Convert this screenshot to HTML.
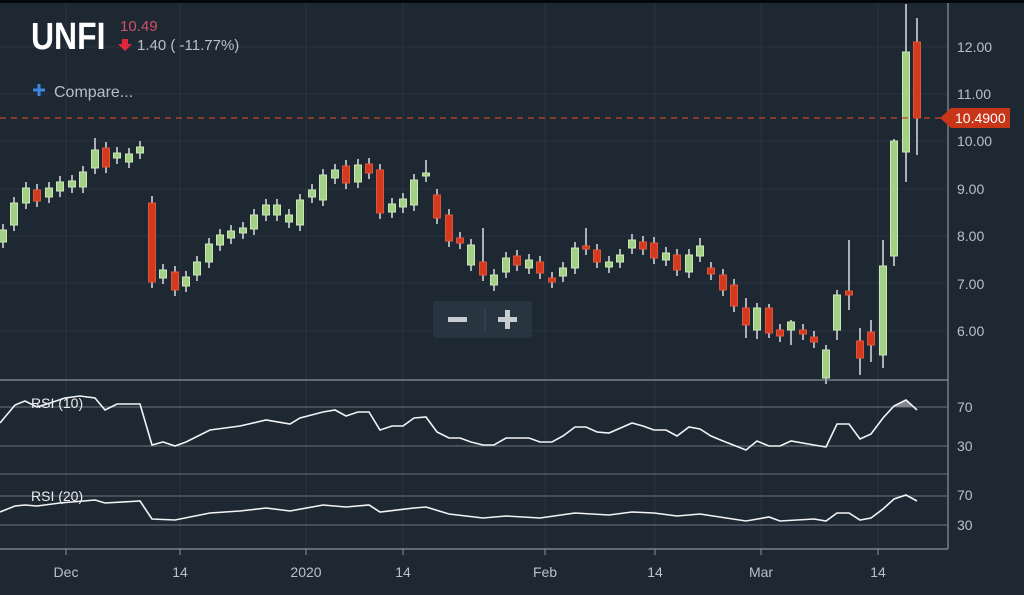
<!DOCTYPE html>
<html><head><meta charset="utf-8">
<style>
html,body{margin:0;padding:0;background:#1e2833;width:1024px;height:595px;overflow:hidden;font-family:"Liberation Sans",sans-serif}
svg{position:absolute;left:0;top:0}
</style></head><body>
<svg width="1024" height="595" id="s" xmlns="http://www.w3.org/2000/svg">
<rect width="1024" height="595" fill="#1e2833"/>
<rect width="1024" height="3" fill="#05080b"/>
<g stroke="#2a3541" stroke-width="1" id="grid"></g>
<g id="c"></g>
<line x1="0" y1="118" x2="948" y2="118" stroke="#c8452a" stroke-width="1.2" stroke-dasharray="6,5"/>
<line x1="948" y1="3" x2="948" y2="549" stroke="#8a939c" stroke-width="1.2"/>
<line x1="0" y1="380" x2="948" y2="380" stroke="#8a939c" stroke-width="1.2"/>
<line x1="0" y1="474" x2="948" y2="474" stroke="#6c757e" stroke-width="1"/>
<line x1="0" y1="549" x2="948" y2="549" stroke="#8a939c" stroke-width="1.2"/>
<g stroke="#6c757e" stroke-width="1">
<line x1="0" y1="407" x2="948" y2="407"/><line x1="0" y1="446" x2="948" y2="446"/>
<line x1="0" y1="496" x2="948" y2="496"/><line x1="0" y1="525" x2="948" y2="525"/>
</g>
<g id="r"></g>
<g fill="#b9c0c7" font-size="14">
<text x="957" y="52">12.00</text><text x="957" y="99">11.00</text><text x="957" y="146">10.00</text>
<text x="957" y="194">9.00</text><text x="957" y="241">8.00</text><text x="957" y="289">7.00</text><text x="957" y="336">6.00</text>
<text x="957" y="412">70</text><text x="957" y="451">30</text><text x="957" y="500">70</text><text x="957" y="530">30</text>
<text x="66" y="577" text-anchor="middle">Dec</text><text x="180" y="577" text-anchor="middle">14</text>
<text x="306" y="577" text-anchor="middle">2020</text><text x="403" y="577" text-anchor="middle">14</text>
<text x="545" y="577" text-anchor="middle">Feb</text><text x="655" y="577" text-anchor="middle">14</text>
<text x="761" y="577" text-anchor="middle">Mar</text><text x="878" y="577" text-anchor="middle">14</text>
</g>
<g stroke="#8a939c"><line x1="66" y1="549" x2="66" y2="555"/><line x1="180" y1="549" x2="180" y2="555"/><line x1="306" y1="549" x2="306" y2="555"/><line x1="403" y1="549" x2="403" y2="555"/><line x1="545" y1="549" x2="545" y2="555"/><line x1="655" y1="549" x2="655" y2="555"/><line x1="761" y1="549" x2="761" y2="555"/><line x1="878" y1="549" x2="878" y2="555"/></g>
<path d="M940 118 L951 108 H1010 V128 H951 Z" fill="#c8361a"/>
<text x="955" y="123" fill="#fff" font-size="14">10.4900</text>
<text x="31" y="408" fill="#e8ecef" font-size="14">RSI (10)</text>
<text x="31" y="501" fill="#e8ecef" font-size="14">RSI (20)</text>
<rect x="433" y="301" width="99" height="37" rx="3" fill="#283440"/>
<line x1="485" y1="309" x2="485" y2="331" stroke="#3c4855"/>
<rect x="448" y="317" width="19" height="5" fill="#c7ccd1"/>
<rect x="498" y="317" width="19" height="5" fill="#c7ccd1"/><rect x="505" y="310" width="5" height="19" fill="#c7ccd1"/>
<text x="0" y="0" fill="#fff" font-size="38" font-weight="bold" transform="translate(31,49) scale(0.84,1)">UNFI</text>
<text x="120" y="31" fill="#d05065" font-size="15">10.49</text>
<path d="M122 39 h6 v5 h4 l-7 7 l-7 -7 h4 z" fill="#e0263a"/>
<text x="137" y="50" fill="#b9c0c7" font-size="15">1.40 ( -11.77%)</text>
<path d="M33 90 h12 M39 84 v12" stroke="#3a86e0" stroke-width="3"/>
<text x="54" y="97" fill="#b7bec6" font-size="16">Compare...</text>
</svg>
<script>
var NS="http://www.w3.org/2000/svg";
function el(p,t,a){var e=document.createElementNS(NS,t);for(var k in a)e.setAttribute(k,a[k]);p.appendChild(e);return e;}
var g=document.getElementById('grid');
[47,94,141,189,236,283,331].forEach(function(y){el(g,'line',{x1:0,y1:y,x2:948,y2:y});});
[66,180,306,403,545,655,761,878].forEach(function(x){el(g,'line',{x1:x,y1:3,x2:x,y2:549});});
var d=[[3,230,242,'g'],[14,203,225,'g'],[26,188,203,'g'],[37,190,201,'r'],[49,188,197,'g'],[60,182,191,'g'],[72,181,187,'g'],[83,172,187,'g'],[95,150,168,'g',138],[106,148,167,'r'],[117,153,158,'g'],[129,154,162,'g'],[140,147,153,'g'],[152,203,282,'r',196],[163,270,278,'g'],[175,272,290,'r'],[186,277,286,'g'],[197,262,275,'g'],[209,244,262,'g'],[220,235,245,'g'],[231,231,238,'g'],[243,228,233,'g'],[254,215,229,'g'],[266,205,215,'g'],[277,205,215,'g'],[289,215,222,'g'],[300,200,225,'g'],[312,190,197,'g'],[323,175,200,'g'],[335,170,178,'g'],[346,166,183,'r'],[358,165,182,'g'],[369,164,173,'r'],[380,170,213,'r'],[392,204,212,'g'],[403,199,207,'g'],[414,180,205,'g'],[426,173,176,'g',160],[437,195,218,'r'],[449,215,241,'r'],[460,238,243,'r'],[471,245,265,'g'],[483,262,275,'r',228],[494,275,285,'g'],[506,258,272,'g'],[517,256,265,'r'],[529,260,268,'g'],[540,262,273,'r'],[552,278,282,'r'],[563,268,276,'g'],[575,248,268,'g'],[586,246,249,'r',228],[597,250,262,'r'],[609,262,267,'g'],[620,255,262,'g'],[632,240,248,'g'],[643,242,249,'r'],[654,243,258,'r'],[666,253,260,'g'],[677,255,270,'r'],[689,255,272,'g'],[700,246,256,'g',238],[711,268,274,'r'],[723,275,290,'r'],[734,285,306,'r'],[746,308,325,'r',298,338],[757,308,330,'g',303,339],[769,308,333,'r',304,338],[780,330,336,'r'],[791,322,330,'g',320,345],[803,330,334,'r'],[814,337,342,'r'],[826,350,378,'g',345],[837,295,330,'g',290,340],[849,291,295,'r',240,310],[860,341,358,'r',328,375],[871,332,345,'r',320,362],[883,266,355,'g',240,368],[894,141,256,'g',139,266],[906,52,152,'g',4,182],[917,42,118,'r',18,155]];
var c=document.getElementById('c');
d.forEach(function(a){var x=a[0],t=a[1],b=a[2],col=a[3];var wt=a[4]||t-6,wb=a[5]||b+6;
el(c,'line',{x1:x,y1:wt,x2:x,y2:wb,stroke:'#d8dde2','stroke-width':1.5});
el(c,'rect',{x:x-3.5,y:t,width:7,height:Math.max(3,b-t),fill:col=='g'?'#a3cf86':'#d3391d',stroke:col=='g'?'#c9e8b4':'#e0553a','stroke-width':1});});
var r=document.getElementById('r');
var r10="0,423 15,405 25,401 37,407 50,403 65,398 80,396 95,398 105,410 117,404 140,404 152,445 163,442 175,446 186,442 210,430 240,426 266,420 290,424 300,418 323,412 335,410 346,416 358,412 369,412 380,430 392,426 403,426 414,418 426,417 437,432 449,438 460,438 471,442 483,445 494,445 506,438 529,438 540,442 552,442 563,436 575,427 586,427 597,432 609,433 632,423 643,426 654,430 666,430 677,436 689,427 700,429 711,436 723,441 746,450 757,441 769,446 780,446 791,441 814,445 826,447 837,424 849,424 860,439 871,434 883,418 894,406 906,400 917,410";
var r20="0,512 15,506 25,505 37,506 60,503 95,500 105,503 140,501 152,519 175,520 210,513 240,511 266,508 290,511 323,505 346,507 369,505 380,512 414,508 426,507 449,514 483,518 506,516 540,518 575,513 609,515 632,512 654,513 677,516 700,514 746,521 769,517 780,521 814,519 826,521 837,513 849,513 860,520 871,518 883,509 894,499 906,495 917,501";
el(r,'polygon',{points:"894,407 906,400 912,407",fill:'#7d868f'});
el(r,'polyline',{points:r10,fill:'none',stroke:'#f2f4f6','stroke-width':1.6});
el(r,'polyline',{points:r20,fill:'none',stroke:'#f2f4f6','stroke-width':1.6});
</script>
</body></html>
